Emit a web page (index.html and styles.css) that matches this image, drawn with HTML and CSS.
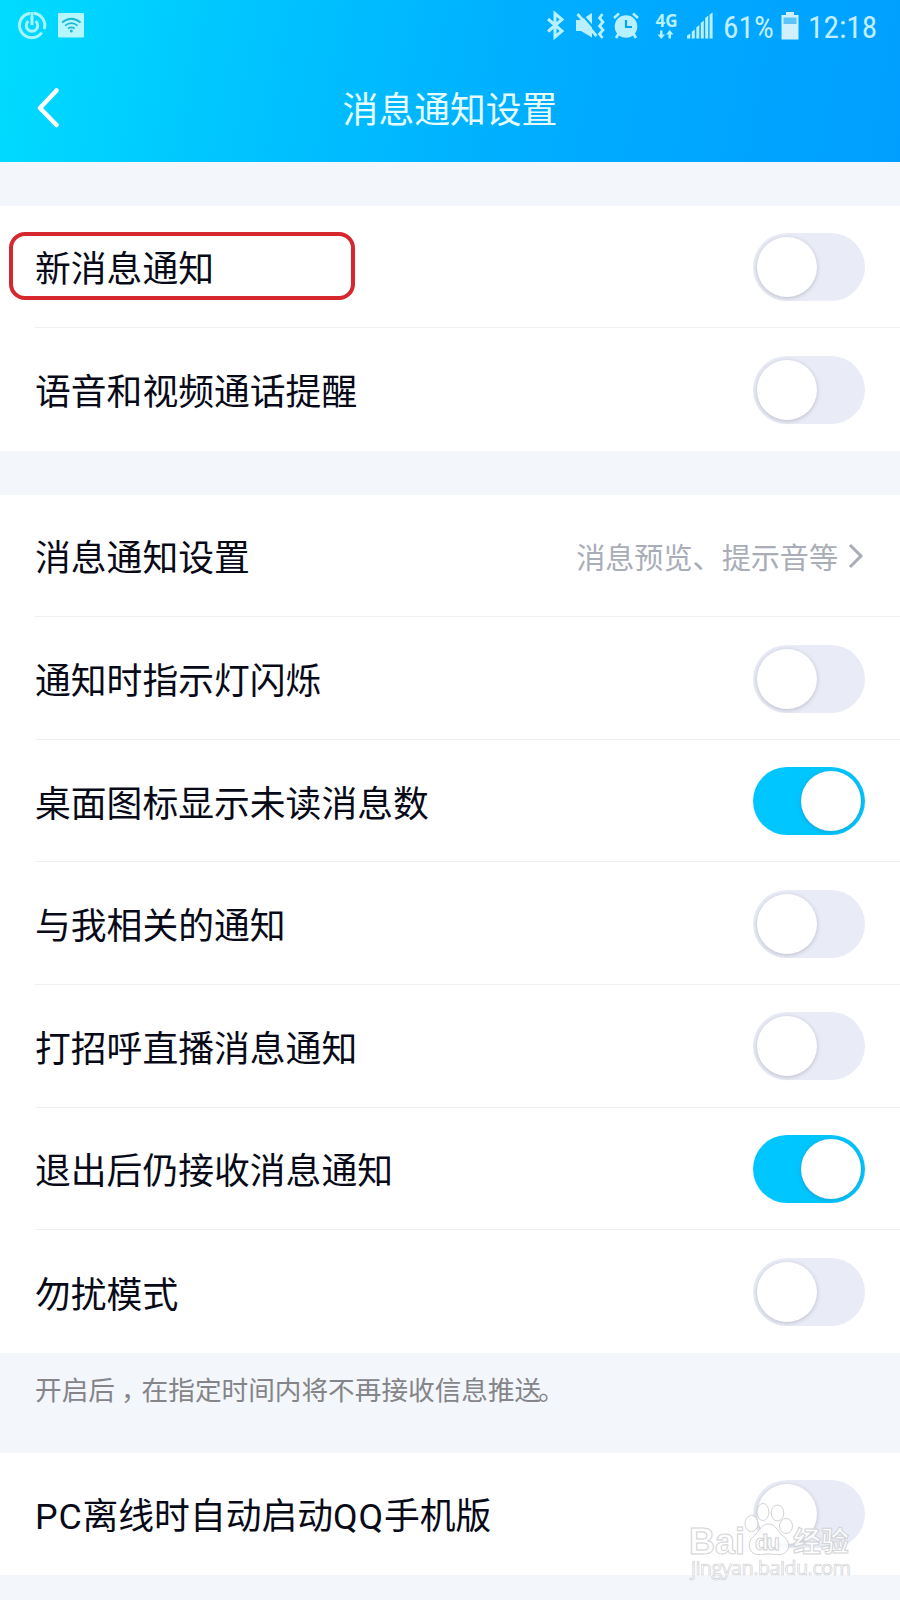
FILE: index.html
```
<!DOCTYPE html>
<html lang="zh-CN">
<head>
  <title>消息通知设置</title>
  <meta charset="utf-8">
  <meta name="viewport" content="width=device-width, initial-scale=1.0">
  <link rel="stylesheet" href="styles.css">
</head>
<body>
<header class="header">
  <div class="status">
    <svg class="status-left" width="100" height="54" viewBox="0 0 100 54">
      <g fill="none" stroke="#a9f6ff" stroke-width="3">
        <path d="M30 13.2A12.3 12.3 0 1 0 41.8 32.5"/>
        <path d="M34 13.2A12.3 12.3 0 0 1 44.2 29"/>
        <path d="M28.4 21.2A5.7 5.7 0 1 0 35.6 21.2M32 12v13"/>
      </g>
      <rect x="58" y="13" width="26" height="24.500" rx="1" fill="#b5f6ff"/>
      <g fill="none" stroke="#1bb9d8" stroke-width="1.700">
        <path d="M62 22.500q9.300-7.500 18.600 0M65 25.600q6.300-5 12.600 0M68 28.600q3.300-2.500 6.600 0"/>
      </g>
      <circle cx="71.300" cy="31" r="1.500" fill="#1bb9d8"/>
    </svg>
    <div class="status-right">
      <svg width="180" height="54" viewBox="535 0 180 54">
        <path d="M548 19l14 12-7 6V13.500l7 6L548 31.500" fill="none" stroke="#b9f0ff" stroke-width="3"/>
        <g fill="#b9f0ff">
          <path d="M576 20h5l11-7v24.500L581 31h-5z"/>
          <circle cx="626" cy="26.500" r="11.300"/>
          <path d="M619 33l-3 5M633 33l3 5M614 18l5-4.500M638 18l-5-4.500" stroke="#b9f0ff" stroke-width="2.600"/>
          <path d="M660 30.500h2.500v4h2.500L661.250 39l-3.750-4.500h2.500zM668.500 38.500v-4H666l3.750-4.500 3.750 4.500H671v4z"/>
          <path d="M687 38.500v-3l3.300-2v5zM691.800 38.500v-7l3-2v9zM696.300 38.500v-11l3-2.500v13.500zM700.800 38.500V23l3-2.500v18zM705.200 38.500V18l3-2.500v23zM709.600 38.500V14.500l3-2v26z"/>
        </g>
        <path d="M580 12l19 22" stroke="#00aaff" stroke-width="2"/>
        <path d="M577.500 14l19 22" stroke="#b9f0ff" stroke-width="2.800"/>
        <path d="M602.500 14l-3 4 3.500 4-3.500 4 3.500 4-3.500 4 3 4" fill="none" stroke="#b9f0ff" stroke-width="2.700"/>
        <path d="M626 20v7h6" fill="none" stroke="#00a8ee" stroke-width="2.200"/>
        <text class="net" x="655.500" y="26.500">4G</text>
      </svg>
      <span class="percent">61%</span>
      <svg class="battery" width="18" height="28" viewBox="0 0 18 28">
        <path d="M5 0h8v3h4.500v24.500H.500V3H5z" fill="#d0f0ff"/>
        <path d="M2.500 5.500h13v6.500h-13z" fill="#5cc4f8"/>
      </svg>
      <span class="time">12:18</span>
    </div>
  </div>
  <div class="navbar">
    <svg class="back" width="24" height="42" viewBox="0 0 24 42">
      <path d="M19.500 3.500L3 21l16.500 17" fill="none" stroke="#fff" stroke-width="4.500" stroke-linecap="round" stroke-linejoin="round"/>
    </svg>
    <h1 class="title">消息通知设置</h1>
  </div>
</header>

<section class="group">
  <div class="row"><span class="label marked">新消息通知</span><i class="switch"></i></div>
  <div class="row"><span class="label">语音和视频通话提醒</span><i class="switch"></i></div>
</section>

<section class="group">
  <div class="row">
    <span class="label">消息通知设置</span>
    <span class="value">消息预览、提示音等</span>
    <svg class="arrow" width="16" height="26" viewBox="0 0 16 26">
      <path d="M2 2l11 11L2 24" fill="none" stroke="#a9adb7" stroke-width="3"/>
    </svg>
  </div>
  <div class="row"><span class="label">通知时指示灯闪烁</span><i class="switch"></i></div>
  <div class="row"><span class="label">桌面图标显示未读消息数</span><i class="switch on"></i></div>
  <div class="row"><span class="label">与我相关的通知</span><i class="switch"></i></div>
  <div class="row"><span class="label">打招呼直播消息通知</span><i class="switch"></i></div>
  <div class="row"><span class="label">退出后仍接收消息通知</span><i class="switch on"></i></div>
  <div class="row"><span class="label">勿扰模式</span><i class="switch"></i></div>
</section>
<p class="note">开启<span class="wide">后</span><span class="comma">，</span>在指定时间内将不再接收信息推<span class="tight">送</span>。</p>

<section class="group last">
  <div class="row"><span class="label"><span class="latin">PC</span>离线时自动启动<span class="latin">QQ</span>手机版</span><i class="switch"></i></div>
</section>

<svg class="watermark" width="180" height="90" viewBox="680 1495 180 90">
  <g class="outline">
    <text class="brand" x="689" y="1554" textLength="56">Bai</text>
    <ellipse cx="751.500" cy="1523.500" rx="6.500" ry="8"/>
    <ellipse cx="763" cy="1512" rx="6" ry="8.500"/>
    <ellipse cx="777.500" cy="1513" rx="6.300" ry="8"/>
    <ellipse cx="786" cy="1526" rx="6.500" ry="7.500"/>
    <path d="M768 1524c-6 0-8 6-13 11-5 4-7 9-5 14 3 8 11 5 19 5s15 3 19-5c2-6-1-10-6-14-5-5-7-11-14-11z"/>
    <text class="du" x="755" y="1550" textLength="25">du</text>
    <text class="cn" x="793" y="1552" textLength="56">经验</text>
    <text class="site" x="691" y="1575" textLength="160">jingyan.baidu.com</text>
  </g>
</svg>
</body>
</html>
```
FILE: styles.css
```
*,
*::before {
  box-sizing: border-box;
}

body {
  position: relative;
  margin: 0;
  height: 1600px;
  overflow: hidden;
  background-color: #f3f6fa;
  color: #080a18;
  font-family: Roboto, "Noto Sans CJK SC", sans-serif;
}

.header {
  height: 161.500px;
  background: linear-gradient(100deg, #00dcff 0%, #00c4ff 28%, #00adff 60%, #009fff 100%);
}

.status {
  display: flex;
  justify-content: space-between;
  height: 54px;
}

.status-right {
  display: flex;
  align-items: center;
  width: 365px;
  color: #c3eeff;
  font-family: "Roboto Condensed", Roboto, sans-serif;
  font-size: 32px;
  white-space: nowrap;
}

.status-right svg {
  flex: none;
}

.net {
  fill: #b9f0ff;
  font: bold 17px "Open Sans", sans-serif;
}

.percent {
  width: 51px;
  margin-left: 8px;
  transform: scaleX(0.98);
  transform-origin: left;
}

.battery {
  margin: -2px 0 0 7px;
}

.time {
  margin-left: 9px;
  transform: scaleX(0.98);
  transform-origin: left;
}

.navbar {
  display: flex;
  align-items: center;
  height: 107px;
  padding: 0 36px;
}

.back {
  margin-left: 1px;
}

.title {
  flex: 1;
  margin: 0 25px 0 0;
  padding-top: 6px;
  color: #e6fdff;
  font-size: 35.800px;
  font-weight: 400;
  line-height: 54px;
  text-align: center;
}

.group {
  margin-top: 44px;
  background-color: #fff;
}

.row {
  display: flex;
  align-items: center;
  height: 122.600px;
  margin-left: 35px;
  padding: 1px 35px 0 0;
  border-bottom: 1px solid #efeff1;
}

.row:last-child {
  border-bottom: 0;
}

.label {
  position: relative;
  flex: 1;
  padding-top: 7px;
  font-size: 35.800px;
  line-height: 54px;
}

.latin {
  letter-spacing: 0.800px;
}

/* red frame around the entry */
.marked::before {
  content: "";
  position: absolute;
  top: -4px;
  left: -26px;
  width: 346px;
  height: 68px;
  border: 4px solid #d6262e;
  border-radius: 16px;
}

.value {
  padding-top: 1px;
  color: #a9adb7;
  font-size: 29.100px;
}

.arrow {
  margin: 0 1px 0 10px;
}

.switch {
  width: 112px;
  height: 68px;
  padding: 4px;
  border-radius: 34px;
  background-color: #e9ecf6;
}

.switch::before {
  content: "";
  display: block;
  width: 60px;
  height: 60px;
  border-radius: 50%;
  background-color: #fff;
  box-shadow: 0 1px 4px rgba(80, 80, 100, 0.3);
}

.switch.on {
  background-color: #00c6ff;
}

.switch.on::before {
  margin-left: 44px;
}

.note {
  height: 100px;
  margin: 0;
  padding: 18px 35px 0;
  color: #848489;
  font-size: 26.650px;
  line-height: 40px;
}

.wide {
  letter-spacing: 6px;
}

.comma {
  letter-spacing: -6px;
}

.tight {
  letter-spacing: -3px;
}

.last {
  margin-top: 0;
}

.last .row {
  height: 122px;
  padding-top: 0;
}

.watermark {
  position: absolute;
  top: 1495px;
  left: 680px;
}

.outline {
  fill: rgba(255, 255, 255, 0.85);
  stroke: #d2d3d6;
  stroke-width: 1;
}

.brand {
  font: bold 36px "Liberation Sans", sans-serif;
}

.du {
  font: bold 22px "Liberation Sans", sans-serif;
}

.cn {
  font: bold 28px "Noto Sans CJK SC", sans-serif;
}

.site {
  font: 20px "Open Sans", sans-serif;
  stroke-width: 0.700;
}
```
